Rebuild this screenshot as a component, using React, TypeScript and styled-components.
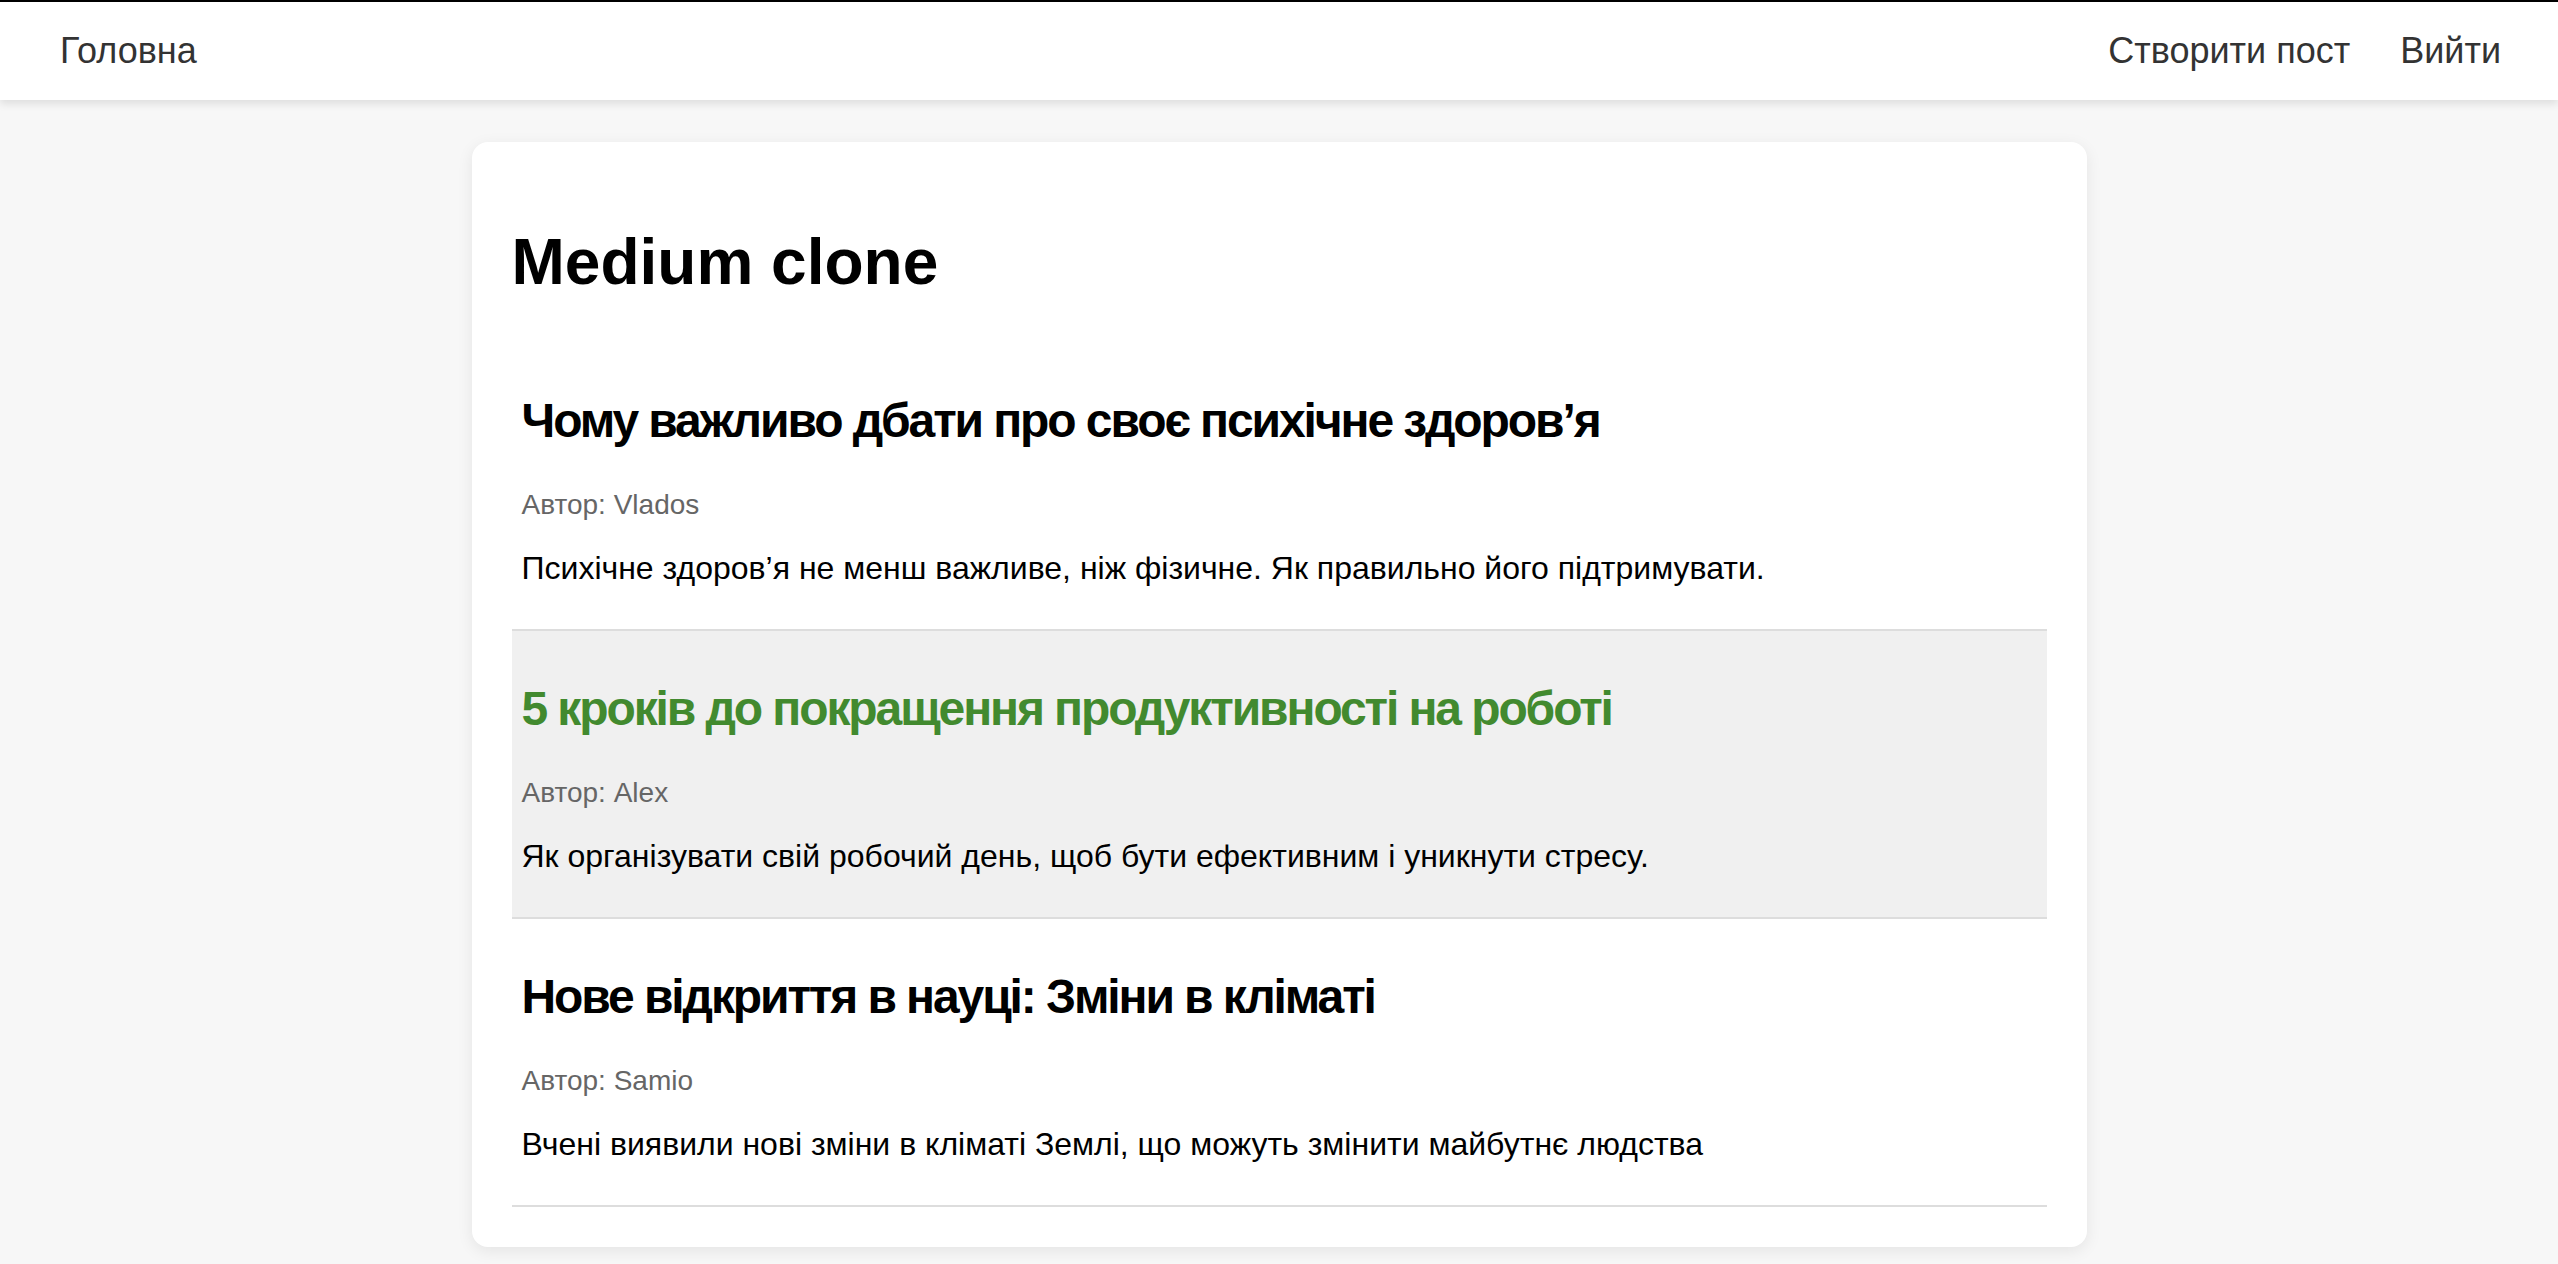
import styled, { createGlobalStyle } from 'styled-components';

const GlobalStyle = createGlobalStyle`
  html, body {
    margin: 0;
    padding: 0;
    background: #f7f7f7;
    font-family: "Liberation Sans", Arial, sans-serif;
  }
`;

const Header = styled.header`
  height: 98px;
  border-top: 2px solid #000;
  background: #fff;
  box-shadow: 0 4px 8px rgba(0, 0, 0, 0.1);
  display: flex;
  align-items: center;
  justify-content: space-between;
  padding: 0 57px 0 60px;
  position: relative;
  z-index: 1;
`;

const NavGroup = styled.nav`
  display: flex;
  align-items: center;
  gap: 50px;
`;

const NavLink = styled.a`
  color: #333;
  font-size: 36px;
  text-decoration: none;
`;

const Main = styled.main`
  padding: 42px 0 16px;
`;

const Card = styled.section`
  width: 1535px;
  margin: 0 auto;
  padding: 40px;
  background: #fff;
  border-radius: 16px;
  box-shadow: 0 4px 16px rgba(0, 0, 0, 0.08);
`;

const PageTitle = styled.h1`
  font-size: 64px;
  font-weight: 700;
  color: #000;
  margin: 43px 0 44px;
`;

const PostItem = styled.article<{ $active?: boolean }>`
  padding: 10px;
  border-bottom: 2px solid #ddd;
  background: ${({ $active }) => ($active ? '#f0f0f0' : 'transparent')};
`;

const PostTitle = styled.h2<{ $active?: boolean }>`
  font-size: 48px;
  font-weight: 700;
  letter-spacing: -2.1px;
  margin: 40px 0 41px;
  color: ${({ $active }) => ($active ? '#428a2f' : '#000')};
`;

const Author = styled.p`
  font-size: 28px;
  color: #666;
  margin: 0;
`;

const Description = styled.p`
  font-size: 32px;
  color: #000;
  margin: 29px 0 32px;
`;

const posts = [
  {
    title: 'Чому важливо дбати про своє психічне здоров’я',
    author: 'Vlados',
    text: 'Психічне здоров’я не менш важливе, ніж фізичне. Як правильно його підтримувати.',
  },
  {
    title: '5 кроків до покращення продуктивності на роботі',
    author: 'Alex',
    text: 'Як організувати свій робочий день, щоб бути ефективним і уникнути стресу.',
    active: true,
  },
  {
    title: 'Нове відкриття в науці: Зміни в кліматі',
    author: 'Samio',
    text: 'Вчені виявили нові зміни в кліматі Землі, що можуть змінити майбутнє людства',
  },
];

export default function App() {
  return (
    <>
      <GlobalStyle />
      <Header>
        <NavGroup>
          <NavLink href="#">Головна</NavLink>
        </NavGroup>
        <NavGroup>
          <NavLink href="#">Створити пост</NavLink>
          <NavLink href="#">Вийти</NavLink>
        </NavGroup>
      </Header>
      <Main>
        <Card>
          <PageTitle>Medium clone</PageTitle>
          {posts.map((post) => (
            <PostItem key={post.title} $active={post.active}>
              <PostTitle $active={post.active}>{post.title}</PostTitle>
              <Author>Автор: {post.author}</Author>
              <Description>{post.text}</Description>
            </PostItem>
          ))}
        </Card>
      </Main>
    </>
  );
}
